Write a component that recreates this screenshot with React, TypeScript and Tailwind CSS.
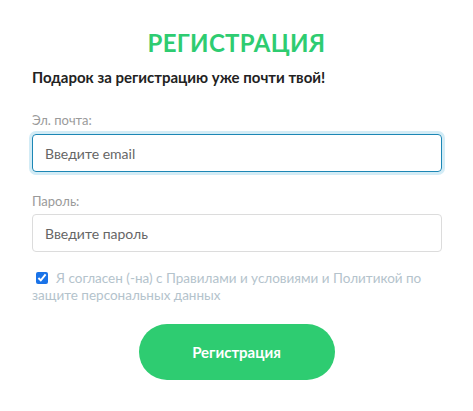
import React from "react";

export default function App() {
  return (
    <div className="w-[473px] h-[411px] bg-white px-8 pt-[28px] font-['Lato','Noto_Sans',sans-serif]">
      <h1 className="text-center text-[24px] font-bold leading-[30px] text-[#2ecc71] tracking-[0.3px]">
        РЕГИСТРАЦИЯ
      </h1>
      <p className="mt-[9px] text-[15px] font-bold leading-5 text-[#222]">
        Подарок за регистрацию уже почти твой!
      </p>

      <label className="mt-[25px] block text-[13px] leading-4 text-[#9a9a9a]">Эл. почта:</label>
      <input
        className="mt-[6px] block h-[38px] w-[410px] rounded-[4px] border border-[#1c87b5] px-3 text-[14px] text-[#555] shadow-[0_0_0_3px_#d3ecf6] outline-none placeholder:text-[#666]"
        placeholder="Введите email"
      />

      <label className="mt-[21px] block text-[13px] leading-4 text-[#9a9a9a]">Пароль:</label>
      <input
        type="text"
        className="mt-[5px] block h-[38px] w-[410px] rounded-[4px] border border-[#dcdcdc] px-3 text-[14px] text-[#555] outline-none placeholder:text-[#666]"
        placeholder="Введите пароль"
      />

      <div className="mt-[18px] text-[13.5px] leading-[17px] text-[#b4c3cc]">
        <input type="checkbox" defaultChecked className="ml-1 mr-2 h-[12px] w-[12px] align-[-1px] accent-[#1a73e8]" />
        Я согласен (-на) с Правилами и условиями и Политикой по защите персональных данных
      </div>

      <div className="mt-[20px] flex justify-center">
        <button className="h-[56px] w-[196px] rounded-full bg-[#2ecc71] text-[15px] font-bold text-white">
          Регистрация
        </button>
      </div>
    </div>
  );
}
